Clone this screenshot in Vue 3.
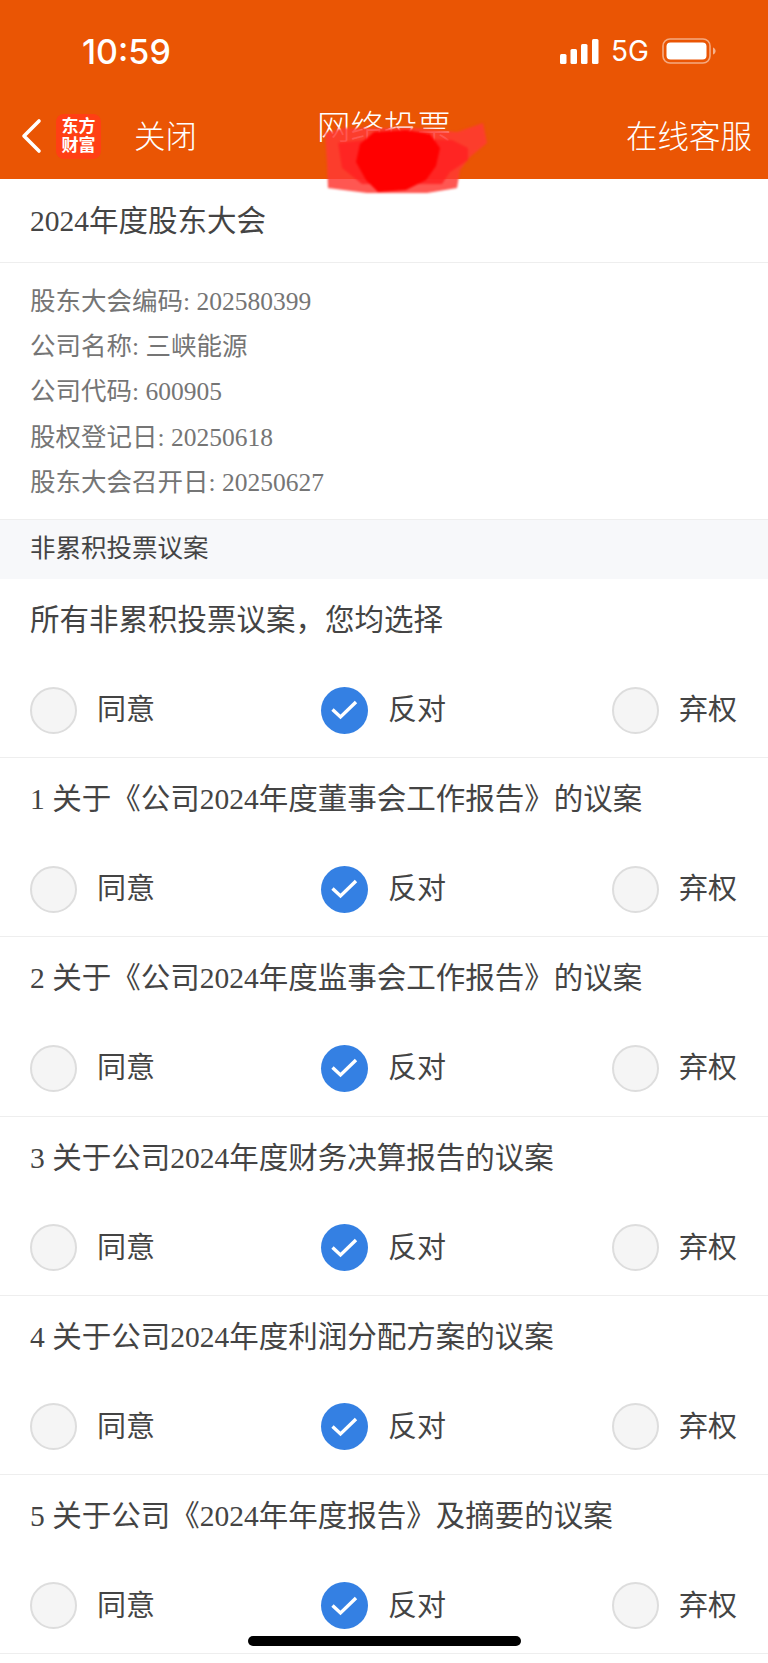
<script setup>
const info = [
  '股东大会编码: 202580399',
  '公司名称: 三峡能源',
  '公司代码: 600905',
  '股权登记日: 20250618',
  '股东大会召开日: 20250627',
]

const motions = [
  '所有非累积投票议案，您均选择',
  '1 关于《公司2024年度董事会工作报告》的议案',
  '2 关于《公司2024年度监事会工作报告》的议案',
  '3 关于公司2024年度财务决算报告的议案',
  '4 关于公司2024年度利润分配方案的议案',
  '5 关于公司《2024年年度报告》及摘要的议案',
]

const options = [
  { label: '同意', checked: false },
  { label: '反对', checked: true },
  { label: '弃权', checked: false },
]
</script>

<template>
  <div class="page">
    <header class="header">
      <div class="status">
        <span class="time">10:59</span>
        <div class="status-right">
          <svg class="signal" width="39" height="25" viewBox="0 0 39 25">
            <rect x="0" y="15" width="6.5" height="10" rx="1.5" fill="#fff" />
            <rect x="10.5" y="10" width="6.5" height="15" rx="1.5" fill="#fff" />
            <rect x="21" y="5" width="6.5" height="20" rx="1.5" fill="#fff" />
            <rect x="32" y="0" width="6.5" height="25" rx="1.5" fill="#fff" />
          </svg>
          <span class="net">5G</span>
          <svg class="battery" width="54" height="26" viewBox="0 0 54 26">
            <rect x="1" y="1" width="47" height="24" rx="7" fill="none" stroke="#fff" stroke-opacity="0.5" stroke-width="1.6" />
            <rect x="4.5" y="4.5" width="40" height="17" rx="4" fill="#fff" />
            <path d="M51 9.5c1.6.5 2.6 2 2.6 3.5s-1 3-2.6 3.5z" fill="#fff" fill-opacity="0.55" />
          </svg>
        </div>
      </div>
      <div class="nav">
        <div class="nav-left">
          <svg class="back" width="22" height="36" viewBox="0 0 22 36">
            <path d="M19 3 4 18l15 15" fill="none" stroke="#fff" stroke-width="3.6" stroke-linecap="round" stroke-linejoin="round" />
          </svg>
          <div class="logo">东方<br />财富</div>
          <span class="close">关闭</span>
        </div>
        <span class="nav-title">网络投票</span>
        <span class="service">在线客服</span>
      </div>
    </header>

    <!-- red scribble covering the account name -->
    <svg class="scribble" width="170" height="84" viewBox="0 0 170 84">
      <path d="M3 15 21 10 95 10 135 14 161 5 165 25 148 39 138 52 135 70 105 75 45 75 6 70 5 45Z" fill="#ff3a34" fill-opacity="0.85" />
      <path d="M16 25 60 20 130 22 146 30 146 42 128 54 120 66 40 66 20 50Z" fill="#ff2222" fill-opacity="0.85" />
      <path d="M38 26 52 14 84 12 108 16 118 30 114 48 104 62 84 72 56 74 44 62 34 44Z" fill="#ff0000" />
    </svg>

    <div class="meeting">2024年度股东大会</div>

    <div class="info">
      <div v-for="line in info" :key="line" class="info-line">{{ line }}</div>
    </div>

    <div class="section">非累积投票议案</div>

    <div v-for="m in motions" :key="m" class="motion">
      <div class="motion-title">{{ m }}</div>
      <div class="choices">
        <div v-for="o in options" :key="o.label" class="choice">
          <span class="radio" :class="{ on: o.checked }">
            <svg v-if="o.checked" width="31" height="24" viewBox="0 0 31 24">
              <path d="M3.5 11.5 11.5 19 27 4" fill="none" stroke="#fff" stroke-width="3.4" />
            </svg>
          </span>
          <span class="choice-label">{{ o.label }}</span>
        </div>
      </div>
    </div>

    <div class="home-bar"></div>
  </div>
</template>

<style>
html,
body {
  margin: 0;
  background: #fff;
}
</style>

<style scoped>
.page {
  position: relative;
  width: 768px;
  height: 1663px;
  overflow: hidden;
  background: #fff;
  font-family: "Liberation Serif", "Noto Sans CJK SC", serif;
  color: #444444;
}

.header {
  position: relative;
  height: 179px;
  background: #ea5504;
  color: #fff;
  font-family: "Liberation Sans", "Noto Sans CJK SC", sans-serif;
}

.status {
  display: flex;
  justify-content: space-between;
  align-items: center;
  height: 102px;
  padding: 0 52px 0 82px;
  box-sizing: border-box;
}

.time {
  font-size: 34px;
  font-family: Inter, "Liberation Sans", sans-serif;
  font-weight: 500;
}

.status-right {
  display: flex;
  align-items: center;
}

.net {
  margin: 0 13px 0 12px;
  font-size: 28px;
  font-family: Inter, "Liberation Sans", sans-serif;
}

.nav {
  display: flex;
  justify-content: space-between;
  align-items: center;
  height: 66px;
  padding: 0 16px 0 20px;
  margin-top: 1px;
}

.nav-left {
  display: flex;
  align-items: center;
}

.logo {
  width: 45px;
  height: 45px;
  margin-left: 14px;
  border-radius: 8px;
  background: #ff3f14;
  font-size: 17px;
  line-height: 19px;
  font-weight: 700;
  text-align: center;
  padding-top: 3px;
  box-sizing: border-box;
}

.close {
  margin: 0 0 5px 33px;
  font-size: 31.5px;
  font-weight: 300;
}

.nav-title {
  position: absolute;
  left: 317px;
  top: 100px;
  font-size: 33.5px;
  font-weight: 300;
}

.service {
  margin-bottom: 5px;
  font-size: 31.5px;
  font-weight: 300;
}

.scribble {
  position: absolute;
  left: 322px;
  top: 118px;
  filter: blur(1.2px);
}

.meeting {
  height: 84px;
  padding-left: 30px;
  line-height: 84px;
  font-size: 29.5px;
  border-bottom: 1px solid #eeeeee;
  box-sizing: border-box;
}

.info {
  height: 256px;
  padding: 16px 0 0 30px;
  box-sizing: border-box;
  color: #757575;
  font-size: 25.5px;
}

.info-line {
  height: 45.2px;
  line-height: 45.2px;
}

.section {
  height: 60px;
  padding-left: 30px;
  background: #f7f8fa;
  border-top: 1px solid #eeeeee;
  box-sizing: border-box;
  line-height: 57px;
  font-size: 25.5px;
}

.motion {
  height: 179.2px;
  border-bottom: 1px solid #eeeeee;
  box-sizing: border-box;
}

.motion-title {
  height: 84px;
  padding-left: 30px;
  line-height: 83px;
  font-size: 29.5px;
}

.choices {
  display: flex;
  justify-content: space-between;
  height: 48px;
  margin-top: 23px;
  padding: 0 31px 0 30px;
}

.choice {
  display: flex;
  align-items: center;
  gap: 20px;
}

.radio {
  display: flex;
  align-items: center;
  justify-content: center;
  width: 47px;
  height: 47px;
  border: 2px solid #dddddd;
  border-radius: 50%;
  background: #f5f5f5;
  box-sizing: border-box;
}

.radio.on {
  border: none;
  background: #3480e3;
}

.choice-label {
  margin-bottom: 6px;
  font-size: 29px;
}

.home-bar {
  position: absolute;
  left: 248px;
  bottom: 17px;
  width: 273px;
  height: 10px;
  border-radius: 5px;
  background: #000;
}
</style>
